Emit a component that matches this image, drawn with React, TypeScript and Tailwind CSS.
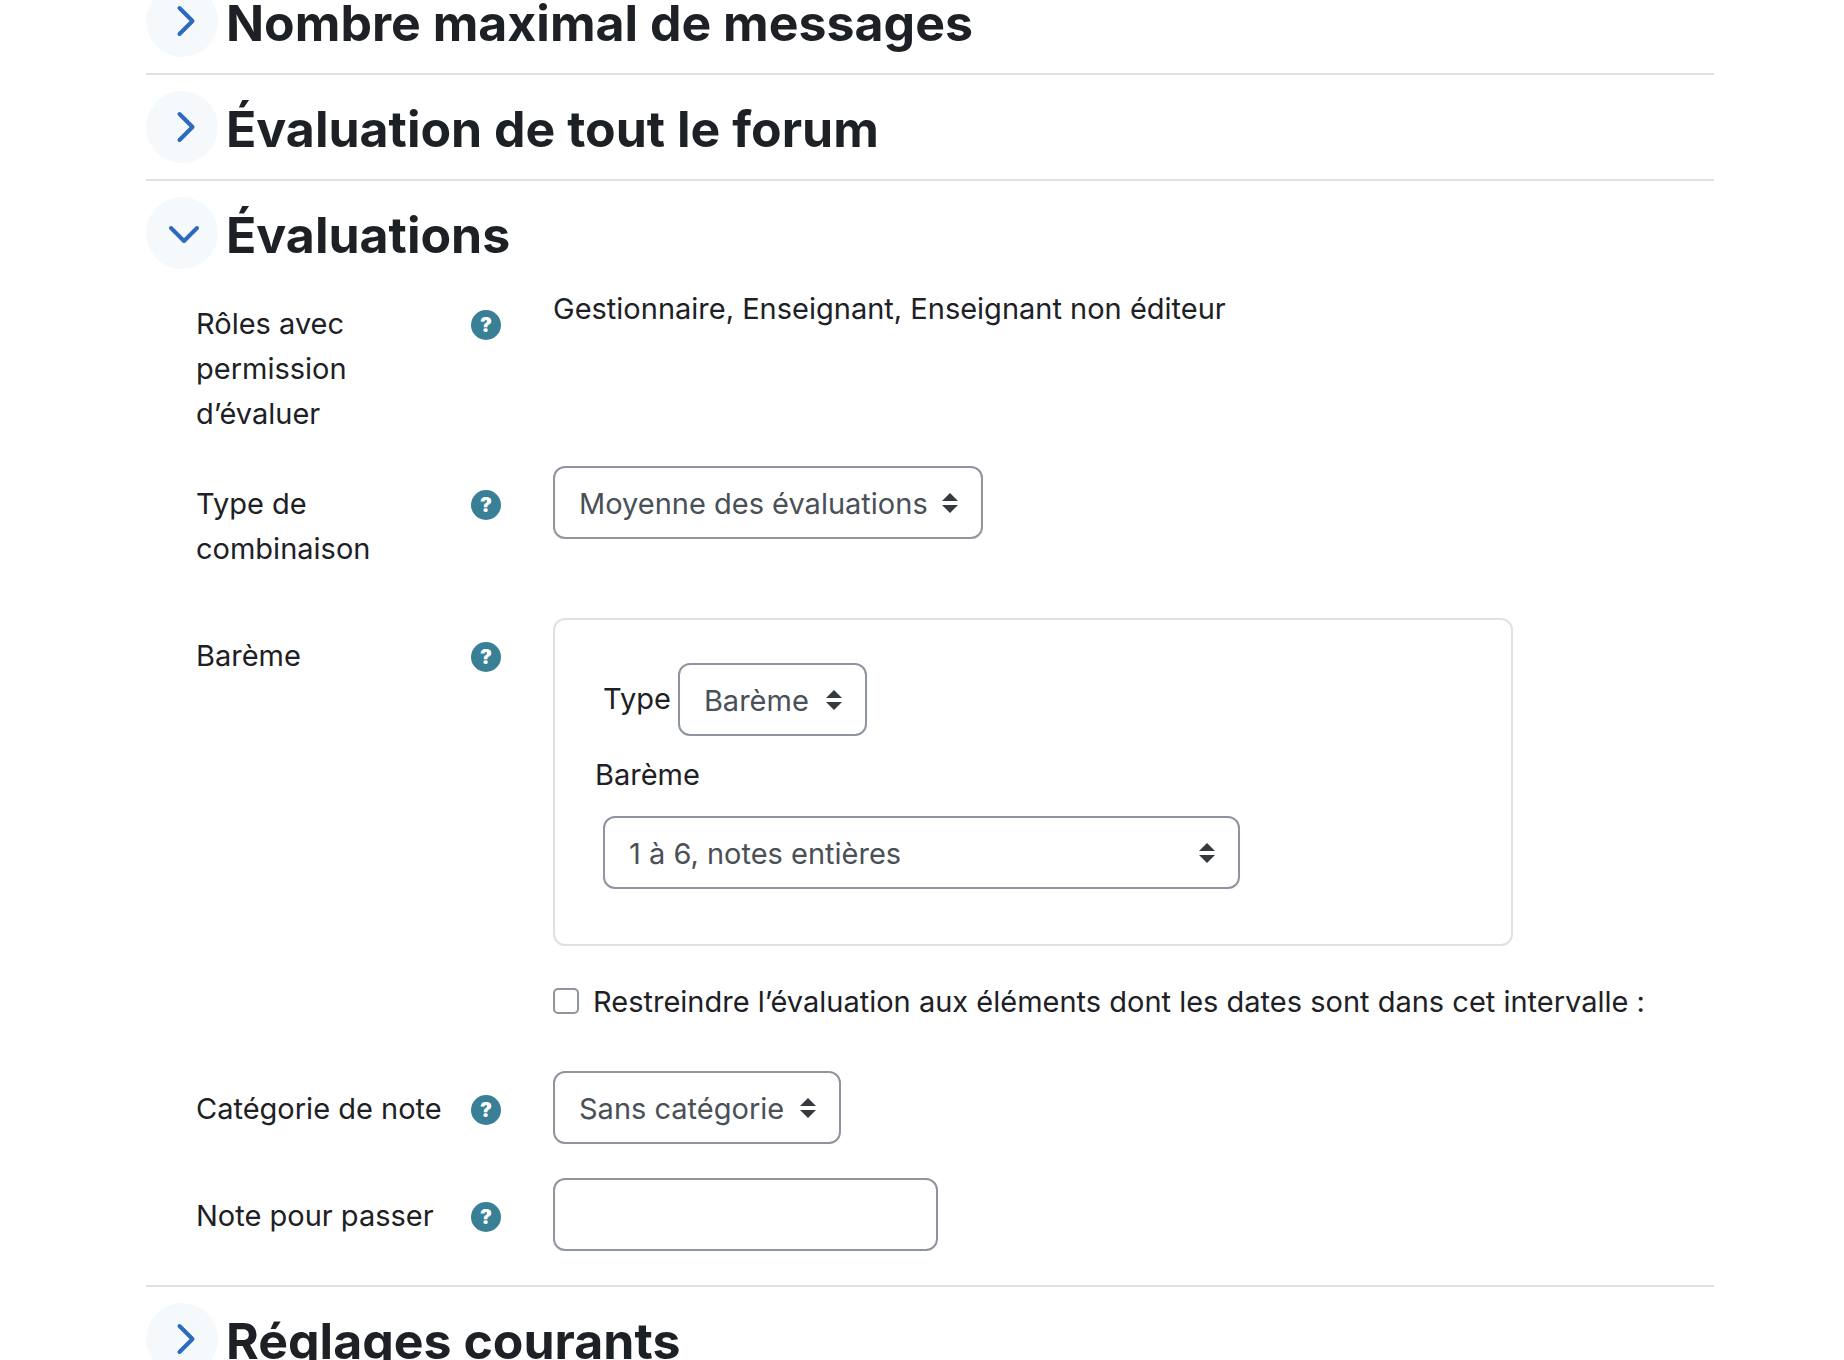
const font = { fontFamily: "Inter, 'Noto Sans', sans-serif" };

const ChevronRight = () => (
  <svg width="72" height="72" viewBox="0 0 72 72" fill="none">
    <path d="M33.5 8 L46.5 21 L33.5 34" transform="translate(0 15)" stroke="#2b6abf" strokeWidth="4" strokeLinecap="round" strokeLinejoin="round" />
  </svg>
);

const ChevronDown = () => (
  <svg width="72" height="72" viewBox="0 0 72 72" fill="none">
    <path d="M25 31 L38 44 L51 31" stroke="#2b6abf" strokeWidth="4" strokeLinecap="round" strokeLinejoin="round" />
  </svg>
);

const Section = ({ title, open, children, className }: { title: string; open?: boolean; children?: React.ReactNode; className?: string }) => (
  <div className={`border-b-2 border-[#dee2e6] pt-4 pb-4 ${className ?? ""}`}>
    <div className="flex items-center h-[72px]">
      <div className="w-[72px] h-[72px] rounded-full bg-[#f5f9fc] shrink-0">{open ? <ChevronDown /> : <ChevronRight />}</div>
      <h3 className="ml-[8px] mt-[3px] text-[50px] leading-[72px] font-bold text-[#1d2125] whitespace-nowrap">{title}</h3>
    </div>
    {children}
  </div>
);

const Help = () => (
  <div className="w-[30px] h-[30px] rounded-full bg-[#398097] text-white text-[20px] leading-[30px] font-black text-center">?</div>
);

const Row = ({ label, className, children }: { label: React.ReactNode; className?: string; children?: React.ReactNode }) => (
  <div className={`flex pl-[50px] ${className ?? ""}`}>
    <div className="w-[275px] pt-[15px] text-[29px] leading-[45px] text-[#1d2125]">{label}</div>
    <div className="w-[82px] pt-[24px]"><Help /></div>
    <div className="flex-1">{children}</div>
  </div>
);

const Select = ({ value, width }: { value: string; width: string }) => (
  <div className={`${width} h-[73px] flex items-center justify-between border-2 border-[#8f959e] rounded-[12px] pl-[24px] pr-[23px] text-[29px] text-[#495057] bg-white`}>
    <span className="whitespace-nowrap pt-[2px]">{value}</span>
    <svg width="16" height="20" viewBox="0 0 16 20" fill="#343a40">
      <path d="M8 0 L16 8 L0 8 Z" />
      <path d="M0 12 L16 12 L8 20 Z" />
    </svg>
  </div>
);

export default function App() {
  return (
    <div className="h-[1360px] overflow-hidden bg-white px-[146px] w-[1844px]" style={font}>
      <div className="w-[1568px] -mt-[31px]">
        <Section title="Nombre maximal de messages" />
        <Section title="Évaluation de tout le forum" />
        <Section title="Évaluations" open className="pb-[34px]">
          <div className="pt-[17px]">
            <Row label={<>Rôles avec<br />permission<br />d’évaluer</>} className="mb-[30px]">
              <div className="text-[29px] leading-[45px] text-[#1d2125] whitespace-nowrap">Gestionnaire, Enseignant, Enseignant non éditeur</div>
            </Row>
            <Row label={<>Type de<br />combinaison</>} className="mb-[47px]">
              <Select value="Moyenne des évaluations" width="w-[430px]" />
            </Row>
            <Row label="Barème" className="mb-[35px]">
              <div className="w-[960px] h-[328px] border-2 border-[#dee2e6] rounded-[12px] pt-[43px] pl-[40px]">
                <div className="flex items-center ml-2">
                  <span className="text-[29px] text-[#1d2125] mr-[7px] mb-[2px]">Type</span>
                  <Select value="Barème" width="w-[189px]" />
                </div>
                <div className="mt-[16px] text-[29px] leading-[45px] text-[#1d2125]">Barème</div>
                <div className="mt-[19px] ml-2">
                  <Select value="1 à 6, notes entières" width="w-[637px]" />
                </div>
              </div>
              <div className="flex items-center mt-[33px] h-[45px]">
                <div className="w-[26px] h-[26px] -mt-[2px] border-2 border-[#8f959e] rounded-[5px] mr-[14px] shrink-0" />
                <span className="text-[29px] text-[#1d2125] whitespace-nowrap">Restreindre l’évaluation aux éléments dont les dates sont dans cet intervalle :</span>
              </div>
            </Row>
            <Row label="Catégorie de note" className="mt-[47px] mb-[34px]">
              <Select value="Sans catégorie" width="w-[288px]" />
            </Row>
            <Row label="Note pour passer">
              <div className="w-[385px] h-[73px] border-2 border-[#8f959e] rounded-[12px]" />
            </Row>
          </div>
        </Section>
        <Section title="Réglages courants" />
      </div>
    </div>
  );
}
